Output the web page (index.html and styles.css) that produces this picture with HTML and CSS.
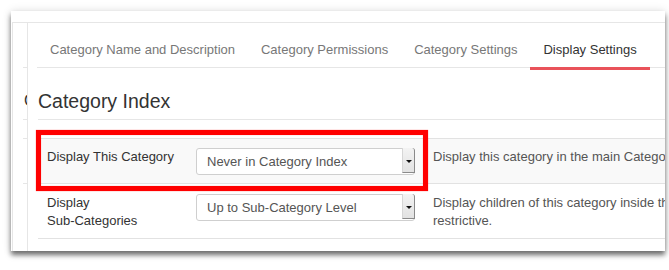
FILE: index.html
```
<!DOCTYPE html>
<html>
<head>
<meta charset="utf-8">
<link rel="stylesheet" href="styles.css">
</head>
<body>
<div class="shot">
  <div class="frame">
    <div class="strip">
      <div class="s1"></div>
      <div class="s2"><span class="ghost">Category</span></div>
      <div class="s3"></div>
      <div class="s4"></div>
    </div>
    <div class="panel">
      <nav class="tabs">
        <span class="tab">Category Name and Description</span>
        <span class="tab">Category Permissions</span>
        <span class="tab">Category Settings</span>
        <span class="tab active">Display Settings</span>
      </nav>
      <h2 class="title">Category Index</h2>
      <div class="table">
        <div class="row shaded">
          <div class="label">Display This Category</div>
          <div class="field">
            <div class="select"><span class="val">Never in Category Index</span><span class="btn"><i class="caret"></i></span></div>
          </div>
          <div class="desc">Display this category in the main Category Index.</div>
        </div>
        <div class="row">
          <div class="label">Display<br>Sub-Categories</div>
          <div class="field">
            <div class="select"><span class="val">Up to Sub-Category Level</span><span class="btn"><i class="caret"></i></span></div>
          </div>
          <div class="desc">Display children of this category inside the Category Index. Settings on subcategories are more<br>restrictive.</div>
        </div>
      </div>
    </div>
  </div>
  <div class="highlight"></div>
</div>
</body>
</html>
```
FILE: styles.css
```
html, body {
  margin: 0;
  padding: 0;
  background: #fff;
}
body {
  font-family: "Liberation Sans", Arial, sans-serif;
  width: 669px;
  height: 270px;
  overflow: hidden;
}
.shot {
  position: relative;
  margin: 11px 0 0 11px;
  width: 654px;
  height: 240px;
  background: #fff;
  overflow: hidden;
  box-shadow: 0 4px 5px rgba(0, 0, 0, 0.55), 0 0 9px rgba(0, 0, 0, 0.12);
}
.frame {
  margin: 11px 0 0 1px;
  border-top: 1px solid #e6e6e6;
  border-left: 1px solid #e6e6e6;
  display: flex;
  height: 240px;
}
.strip {
  width: 14px;
  flex: none;
  padding-left: 10px;
  box-sizing: border-box;
  overflow: hidden;
  display: flex;
  flex-direction: column;
}
.strip > div {
  flex: none;
  border-bottom: 1px solid #e6e6e6;
}
.s1 { height: 44px; }
.s2 { height: 51px; }
.s3 { height: 18px; }
.s4 { height: 44px; }
.ghost {
  display: block;
  margin-top: 24px;
  margin-left: 1px;
  font-size: 16px;
  line-height: 18px;
  color: #333;
  white-space: nowrap;
}
.panel {
  flex: 1;
  min-width: 0;
  border-left: 1px solid #e6e6e6;
  padding-left: 10px;
}
.tabs {
  display: flex;
  margin-left: -1px;
  border-bottom: 1px solid #e6e6e6;
  font-size: 13px;
  line-height: 20px;
}
.tab {
  padding: 17px 13px 7px;
  color: #777;
  white-space: nowrap;
}
.tab.active {
  color: #333;
  position: relative;
}
.tab.active::after {
  content: "";
  position: absolute;
  left: 0;
  right: 0;
  bottom: -3px;
  height: 3px;
  background: #e9525a;
}
.title {
  margin: 22px 0 0;
  padding-bottom: 7px;
  border-bottom: 1px solid #e6e6e6;
  font-size: 19.5px;
  line-height: 22px;
  font-weight: normal;
  color: #333;
}
.table {
  margin-top: 18px;
  width: 900px;
  border-top: 1px solid #e2e2e2;
}
.row {
  display: grid;
  grid-template-columns: 158px 228px 1fr;
  border-bottom: 1px solid #e2e2e2;
  padding: 9px 0 8px;
  font-size: 13px;
  line-height: 18px;
}
.row + .row {
  padding-top: 10px;
}
.row.shaded {
  background: #f9f9f9;
}
.label {
  padding-left: 9px;
  color: #333;
}
.desc {
  padding-left: 9px;
  color: #555;
  white-space: nowrap;
}
.select {
  width: 219px;
  height: 27px;
  box-sizing: border-box;
  border: 1px solid #cfcfcf;
  border-radius: 3px;
  background: #fff;
  display: flex;
  color: #555;
}
.val {
  flex: 1;
  padding-left: 10px;
  line-height: 25px;
  white-space: nowrap;
}
.btn {
  width: 11px;
  margin: -1px -1px 1px 0;
  background: linear-gradient(#f3f3f3, #e2e2e2);
  border-left: 1px solid #d6d6d6;
  border-right: 1px solid #8a8a8a;
  border-bottom: 1px solid #8a8a8a;
  border-top-right-radius: 3px;
  display: flex;
  align-items: center;
  justify-content: center;
}
.caret {
  width: 0;
  height: 0;
  border-left: 3px solid transparent;
  border-right: 3px solid transparent;
  border-top: 3px solid #111;
  margin-top: 2px;
}
.highlight {
  position: absolute;
  left: 25px;
  top: 119px;
  width: 392px;
  height: 61px;
  box-sizing: border-box;
  border: 5px solid #f00;
  box-shadow: 0 0 1px rgba(255, 0, 0, 0.6), inset 0 0 1px rgba(255, 0, 0, 0.6);
}
```
